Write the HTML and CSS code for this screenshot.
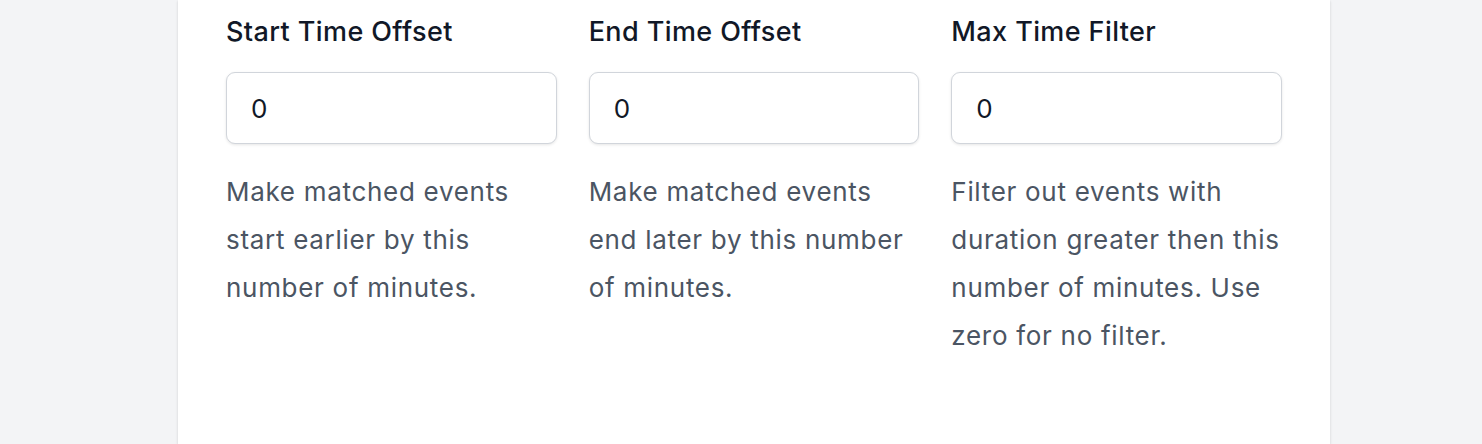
FILE: index.html
```html
<!DOCTYPE html>
<html lang="en">
<head>
<meta charset="utf-8">
<title>Time Filters</title>
<link rel="stylesheet" href="styles.css">
</head>
<body>
<div class="page">
  <div class="card">
    <div class="grid">
      <div class="field">
        <label class="label" for="start">Start Time Offset</label>
        <input class="input" id="start" type="text" value="0">
        <p class="help">Make matched events start earlier by this number of minutes.</p>
      </div>
      <div class="field">
        <label class="label" for="end">End Time Offset</label>
        <input class="input" id="end" type="text" value="0">
        <p class="help">Make matched events end later by this number of minutes.</p>
      </div>
      <div class="field">
        <label class="label" for="max">Max Time Filter</label>
        <input class="input" id="max" type="text" value="0">
        <p class="help">Filter out events with duration greater then this number of minutes. Use zero for no filter.</p>
      </div>
    </div>
  </div>
</div>
</body>
</html>
```
FILE: styles.css
```css
html, body {
  margin: 0;
  padding: 0;
  background: #f3f4f6;
  font-family: Inter, "Noto Sans", "Liberation Sans", sans-serif;
}
.page {
  display: flex;
  justify-content: flex-start;
  padding-left: 178px;
}
.card {
  width: 1152px;
  min-height: 444px;
  background: #ffffff;
  box-shadow: 0 1px 3px rgba(0,0,0,0.1), 0 1px 2px rgba(0,0,0,0.06);
  padding: 14px 48px 0 48px;
  box-sizing: border-box;
}
.grid {
  display: grid;
  grid-template-columns: repeat(3, 1fr);
  column-gap: 32px;
}
.field {
  display: flex;
  flex-direction: column;
}
.label {
  font-size: 27px;
  font-weight: 500;
  line-height: 36px;
  letter-spacing: 0.4px;
  color: #111827;
  margin-bottom: 22px;
}
.input {
  height: 72px;
  box-sizing: border-box;
  border: 1px solid #d1d5db;
  border-radius: 9px;
  box-shadow: 0 1px 3px rgba(0,0,0,0.1);
  padding: 0 24px;
  font-family: inherit;
  font-size: 26px;
  color: #111827;
  background: #fff;
  outline: none;
  width: 100%;
}
.help {
  margin: 24px 0 0 0;
  font-size: 26px;
  line-height: 48px;
  letter-spacing: 0.7px;
  color: #4b5563;
}
```
